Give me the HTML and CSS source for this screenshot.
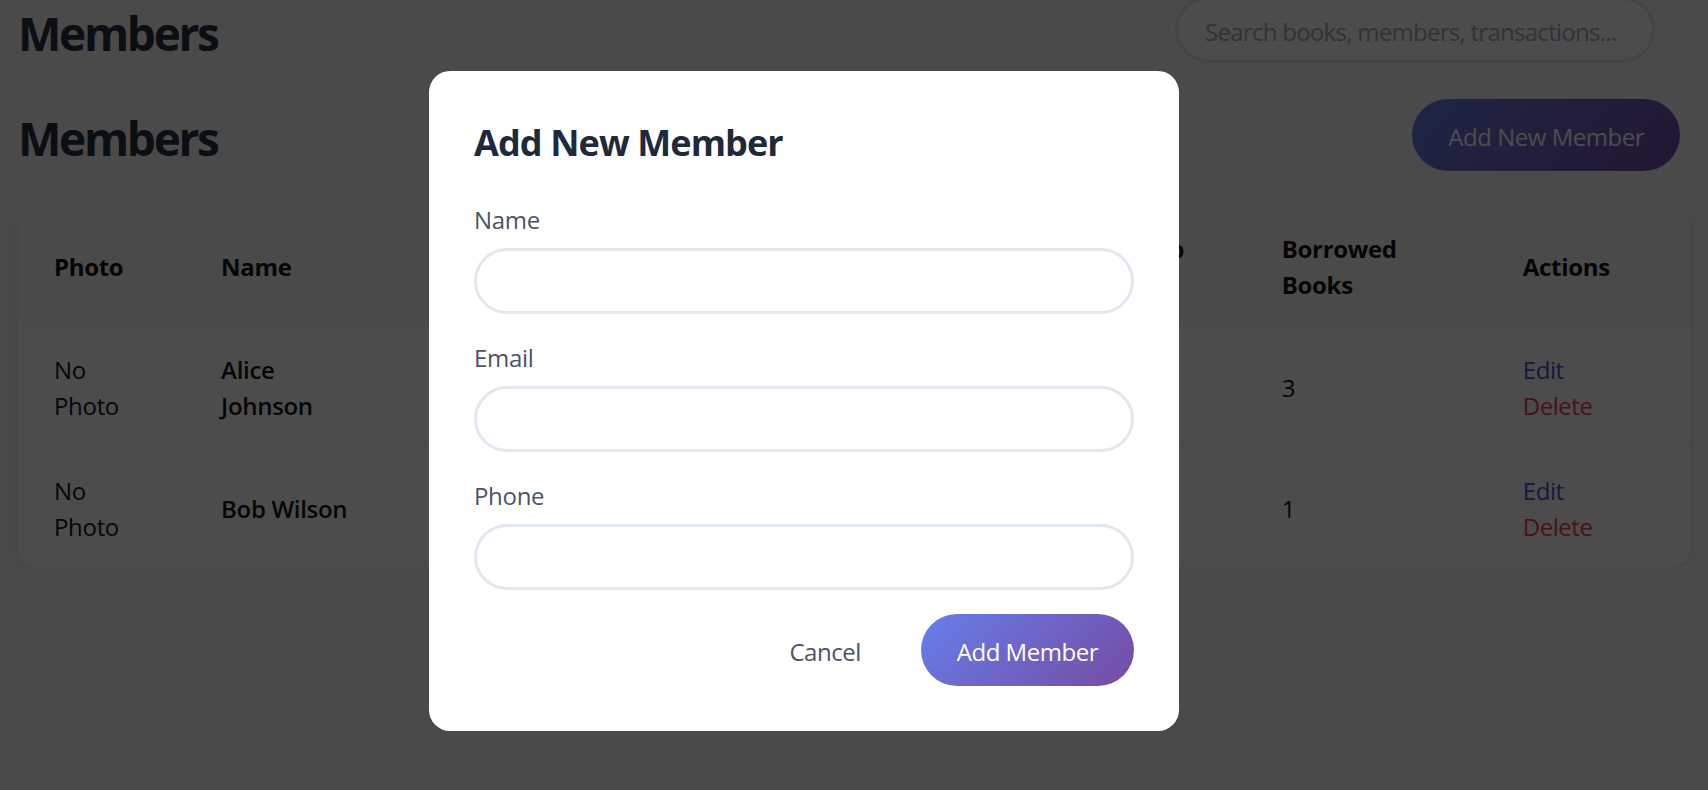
FILE: index.html
```html
<!DOCTYPE html>
<html lang="en">
<head>
<meta charset="utf-8">
<title>Members</title>
<link rel="stylesheet" href="styles.css">
</head>
<body>
<div class="app">
  <header class="topbar">
    <h1 class="page-title">Members</h1>
    <input class="search" type="text" placeholder="Search books, members, transactions...">
  </header>
  <main class="content">
    <div class="section-head">
      <h2 class="section-title">Members</h2>
      <button class="btn-primary" type="button">Add New Member</button>
    </div>
    <div class="card">
      <table class="members-table">
        <colgroup>
          <col class="c-photo">
          <col class="c-name">
          <col class="c-email">
          <col class="c-phone">
          <col class="c-date">
          <col class="c-borrowed">
          <col class="c-actions">
        </colgroup>
        <thead>
          <tr>
            <th>Photo</th>
            <th>Name</th>
            <th>Email</th>
            <th>Phone</th>
            <th>Membership Date</th>
            <th>Borrowed Books</th>
            <th>Actions</th>
          </tr>
        </thead>
        <tbody>
          <tr>
            <td>No Photo</td>
            <td class="name">Alice Johnson</td>
            <td></td>
            <td></td>
            <td></td>
            <td>3</td>
            <td><button class="link-btn edit" type="button">Edit</button><button class="link-btn delete" type="button">Delete</button></td>
          </tr>
          <tr>
            <td>No Photo</td>
            <td class="name">Bob Wilson</td>
            <td></td>
            <td></td>
            <td></td>
            <td>1</td>
            <td><button class="link-btn edit" type="button">Edit</button><button class="link-btn delete" type="button">Delete</button></td>
          </tr>
        </tbody>
      </table>
    </div>
  </main>
</div>

<div class="overlay">
  <div class="modal">
    <h2 class="modal-title">Add New Member</h2>
    <form class="modal-form">
      <div class="field">
        <label for="m-name">Name</label>
        <input id="m-name" type="text">
      </div>
      <div class="field">
        <label for="m-email">Email</label>
        <input id="m-email" type="email">
      </div>
      <div class="field">
        <label for="m-phone">Phone</label>
        <input id="m-phone" type="tel">
      </div>
      <div class="modal-actions">
        <button class="btn-cancel" type="button">Cancel</button>
        <button class="btn-submit" type="button">Add Member</button>
      </div>
    </form>
  </div>
</div>
</body>
</html>
```

FILE: styles.css
```css
* {
  box-sizing: border-box;
}

body {
  margin: 0;
  background: #f7f8fa;
  font-family: "Open Sans", "Noto Sans", sans-serif;
  letter-spacing: -0.02em;
  color: #1f1f1f;
  overflow: hidden;
}

.app {
  padding: 0 18px;
}

.topbar {
  display: flex;
  justify-content: space-between;
  align-items: center;
  height: 65px;
  margin-top: -3px;
  padding-right: 35px;
}

.page-title,
.section-title {
  margin: 0;
  padding-top: 6px;
  font-size: 46px;
  line-height: 52px;
  font-weight: 700;
  letter-spacing: -0.05em;
  color: #253244;
}

.search {
  width: 480px;
  height: 65px;
  border: 3px solid #e2e8f0;
  border-radius: 999px;
  padding: 4px 20px 0 27px;
  background: #fff;
  font-family: inherit;
  font-size: 24px;
  letter-spacing: -0.03em;
  color: #333;
}

.search::placeholder {
  color: #a0aec0;
}

.section-head {
  display: flex;
  justify-content: space-between;
  align-items: center;
  margin-top: 37px;
  padding-right: 10px;
}

.btn-primary,
.btn-submit {
  border: none;
  border-radius: 999px;
  padding: 20px 36px 16px;
  font-family: inherit;
  font-size: 24px;
  line-height: 36px;
  letter-spacing: -0.02em;
  color: #fff;
  background: linear-gradient(135deg, #667eea 0%, #764ba2 100%);
}

.card {
  margin-top: 33px;
  background: #fff;
  border-radius: 18px;
  overflow: hidden;
  box-shadow: 0 3px 15px rgba(0, 0, 0, 0.08);
}

.members-table {
  width: 100%;
  border-collapse: collapse;
  table-layout: fixed;
}

.c-photo { width: 167px; }
.c-name { width: 212px; }
.c-email { width: 370px; }
.c-phone { width: 233px; }
.c-date { width: 245px; }
.c-borrowed { width: 241px; }
.c-actions { width: 203px; }

.members-table th,
.members-table td {
  padding: 27px 36px 21px;
  text-align: left;
  font-size: 24px;
  line-height: 36px;
  vertical-align: middle;
}

.members-table th {
  background: #f8f9fa;
  font-weight: 700;
  color: #111;
  border-bottom: 1px solid #eceef1;
}

.members-table td {
  color: #141414;
  border-bottom: 1px solid #eceef1;
}

.members-table tbody tr:last-child td {
  border-bottom: none;
}

.members-table td.name {
  font-weight: 600;
}

.link-btn {
  display: block;
  border: none;
  background: none;
  padding: 0;
  font-family: inherit;
  font-size: 24px;
  line-height: 36px;
  letter-spacing: -0.02em;
}

.link-btn.edit {
  color: #3b5bdb;
}

.link-btn.delete {
  color: #e64545;
}

.overlay {
  position: fixed;
  inset: 0;
  background: rgba(0, 0, 0, 0.7);
  display: flex;
  align-items: center;
  justify-content: center;
  padding: 12px 100px 0 0;
}

.modal {
  width: 750px;
  background: #fff;
  border-radius: 21px;
  padding: 48px 45px 45px;
}

.modal-title {
  margin: 0 0 33px;
  font-size: 36px;
  line-height: 48px;
  font-weight: 700;
  letter-spacing: -0.025em;
  color: #1e293b;
}

.field {
  margin-bottom: 24px;
}

.field label {
  display: block;
  padding-top: 2px;
  font-size: 24px;
  line-height: 36px;
  margin-bottom: 10px;
  color: #4a5568;
}

.field input {
  display: block;
  width: 100%;
  height: 66px;
  border: 3px solid #e2e8f0;
  border-radius: 999px;
  padding: 0 24px;
  font-family: inherit;
  font-size: 24px;
  background: #fff;
}

.modal-actions {
  display: flex;
  justify-content: flex-end;
  gap: 24px;
}

.btn-cancel {
  border: none;
  background: none;
  border-radius: 999px;
  padding: 20px 36px 16px;
  font-family: inherit;
  font-size: 24px;
  line-height: 36px;
  letter-spacing: -0.02em;
  color: #4a5568;
}
```
